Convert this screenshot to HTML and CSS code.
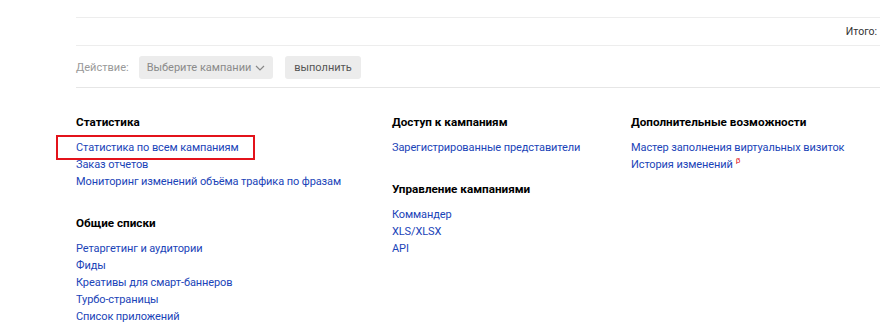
FILE: index.html
```html
<!DOCTYPE html>
<html lang="ru">
<head>
<meta charset="utf-8">
<link rel="stylesheet" href="styles.css">
</head>
<body>
<div class="page">
  <div class="top-row"></div>
  <div class="total-row"><span class="total">Итого:</span></div>
  <div class="action-row">
    <span class="action-label">Действие:</span>
    <button class="btn btn-select">Выберите кампании
      <svg class="chev" width="10" height="6" viewBox="0 0 10 6"><path d="M1 1l4 4 4-4" fill="none" stroke="#888" stroke-width="1.2"/></svg>
    </button>
    <button class="btn btn-run">выполнить</button>
  </div>
  <div class="sections">
    <div class="col col1">
      <div class="group">
        <h3>Статистика</h3>
        <ul>
          <li><a class="marked">Статистика по всем кампаниям</a></li>
          <li><a>Заказ отчетов</a></li>
          <li><a>Мониторинг изменений объёма трафика по фразам</a></li>
        </ul>
      </div>
      <div class="group">
        <h3>Общие списки</h3>
        <ul>
          <li><a>Ретаргетинг и аудитории</a></li>
          <li><a>Фиды</a></li>
          <li><a>Креативы для смарт-баннеров</a></li>
          <li><a>Турбо-страницы</a></li>
          <li><a>Список приложений</a></li>
        </ul>
      </div>
    </div>
    <div class="col col2">
      <div class="group">
        <h3>Доступ к кампаниям</h3>
        <ul>
          <li><a>Зарегистрированные представители</a></li>
        </ul>
      </div>
      <div class="group">
        <h3>Управление кампаниями</h3>
        <ul>
          <li><a>Коммандер</a></li>
          <li><a>XLS/XLSX</a></li>
          <li><a>API</a></li>
        </ul>
      </div>
    </div>
    <div class="col col3">
      <div class="group">
        <h3>Дополнительные возможности</h3>
        <ul>
          <li><a>Мастер заполнения виртуальных визиток</a></li>
          <li><a>История изменений</a><span class="beta">β</span></li>
        </ul>
      </div>
    </div>
  </div>
</div>
</body>
</html>
```
FILE: styles.css
```css
* { box-sizing: border-box; }
html, body { margin: 0; padding: 0; background: #fff; }
body {
  font-family: Roboto, "Liberation Sans", sans-serif;
  font-size: 11px;
  color: #000;
}
.page { padding-left: 76px; }
.top-row {
  height: 18px;
  border-bottom: 1px solid #ededed;
}
.total-row {
  height: 28px;
  border-bottom: 1px solid #ededed;
  display: flex;
  align-items: center;
  justify-content: flex-end;
  padding-right: 3px;
}
.total { font-size: 10.5px; color: #333; }
.action-row {
  height: 42px;
  border-bottom: 1px solid #e6e6e6;
  display: flex;
  align-items: center;
  padding-top: 2px;
}
.action-label { color: #999; font-size: 11px; width: 63px; }
.btn {
  font-family: inherit;
  font-size: 11px;
  border: 0;
  border-radius: 3px;
  background: #ececec;
  height: 23px;
  display: flex;
  align-items: center;
  justify-content: center;
  gap: 4px;
  white-space: nowrap;
  padding: 0;
}
.btn-select { color: #8a8a8a; width: 134px; }
.btn-run { color: #555; width: 76px; margin-left: 12px; }
.chev { margin-top: 1px; }
.sections {
  display: flex;
  padding-top: 26px;
}
.col1 { width: 316px; }
.col2 { width: 239px; }
.group { margin-bottom: 25px; }
.group:last-child { margin-bottom: 0; }
h3 {
  margin: 0 0 8px;
  font-size: 11.7px;
  font-weight: 700;
  line-height: 17px;
}
ul { list-style: none; margin: 0; padding: 0; }
li { line-height: 17px; height: 17px; white-space: nowrap; }
a { color: #1a44b8; font-size: 11px; letter-spacing: -0.1px; }
.marked { position: relative; }
.marked::after {
  content: "";
  position: absolute;
  left: -20px;
  right: -16px;
  top: -6px;
  bottom: -6px;
  border: 2px solid #e3131b;
}
.beta {
  color: #e3131b;
  font-size: 8px;
  line-height: 0;
  margin-left: 3px;
  position: relative;
  top: -5px;
}
```
